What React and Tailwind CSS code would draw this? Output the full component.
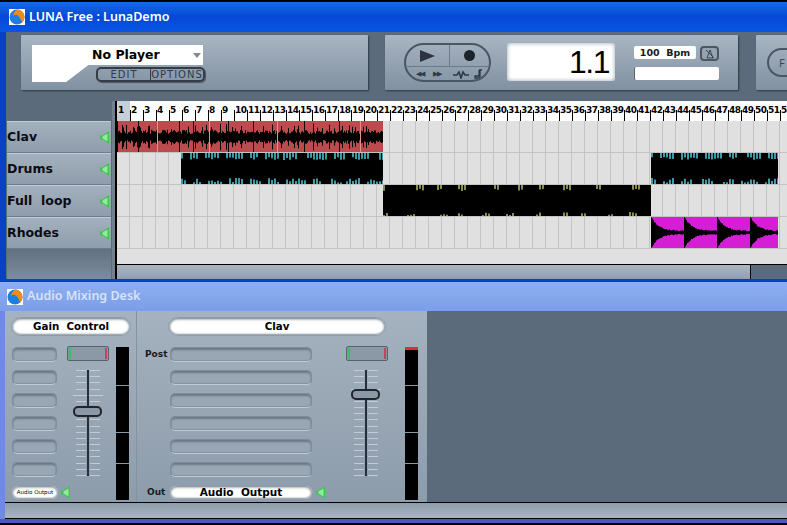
import React from 'react';

const dejavu = "font-['DejaVu_Sans',sans-serif]";

// small seeded random so the waves stay the same between runs
const makeRand = (seed) => {
  let s = seed;
  return () => {
    s = (s * 16807) % 2147483647;
    return s / 2147483647;
  };
};

const LunaIcon = () => (
  <svg width="16" height="16" viewBox="0 0 16 16" className="shrink-0">
    <rect width="16" height="16" fill="#fff" />
    <circle cx="8" cy="8" r="7.5" fill="#1c7fe0" />
    <path d="M8 .5C12 .5 15.5 4 15.5 8c0 2-1 4-2.5 5.5C12 10 10 7 8 6 6.5 5.5 5 6 4 7 4.500 4 6 2 8 .5z" fill="#f08a1d" />
  </svg>
);

const Speaker = () => (
  <svg width="9" height="13" viewBox="0 0 9 13" className="shrink-0">
    <path d="M0 4.500h2.500L9 0v13L2.500 8.500H0z" fill="#3fc458" />
    <path d="M2.500 5.500L7.500 2.500v8L2.500 7.500z" fill="#8fec9a" />
  </svg>
);

const ClavWave = () => {
  const r = makeRand(71);
  const hits = [0, 21, 40, 62, 76, 92, 111, 136, 160, 187, 222, 243];
  let d = '';
  for (let x = 0; x < 266; x++) {
    const a = 3 + r() * 4 + (r() > 0.75 ? r() * 8 : 0);
    d += `M${x + 0.5} ${16 - a}V${16 + a}`;
  }
  return (
    <svg width="266" height="31" className="block">
      <path d={d} stroke="#000" strokeWidth="1" />
      {hits.map((x, i) => (
        <path key={x} d={`M${x + 0.5} 0V31`} stroke={i % 3 === 2 ? '#e98c8c' : '#1a0505'} strokeWidth="1" />
      ))}
    </svg>
  );
};

// black clip with bright ticks on its top and bottom edge, in clusters
const TickWave = ({ width, seed, color, on, off, top, bottom, stroke }) => {
  const r = makeRand(seed);
  let d = '';
  [0, 1].forEach((side) => {
    let run = on * r();
    let active = true;
    for (let x = 0; x < width; x += 3) {
      if (run <= 0) {
        active = !active;
        run = (active ? on : off) * (0.4 + r());
      }
      run -= 3;
      if (!active) continue;
      if (side === 0) d += `M${x + 1} 0V${top * (0.6 + r() * 0.4)}`;
      else d += `M${x + 1} ${32 - bottom * (0.35 + r() * 0.65)}V32`;
    }
  });
  return (
    <svg width={width} height="32" className="block">
      <path d={d} stroke={color} strokeWidth={stroke} />
    </svg>
  );
};

const RhodesWave = () => {
  const r = makeRand(5);
  const hits = [0, 33, 66, 99];
  const amp = (x) => {
    const h = hits.filter((v) => v <= x).pop();
    const t = x - h;
    return 1 + 14 * Math.exp(-t / 7) + r() * 1.2;
  };
  let d = '';
  for (let x = 0; x < 127; x++) {
    const a = amp(x);
    d += `M${x + 0.5} ${15.5 - a}V${15.5 + a}`;
  }
  return (
    <svg width="127" height="31" className="block">
      <path d={d} stroke="#000" strokeWidth="1" />
    </svg>
  );
};

const tracks = [
  {
    name: 'Clav',
    clips: [{ start: 0, width: 266, bg: 'bg-[#bb4b4d]', wave: <ClavWave /> }],
  },
  {
    name: 'Drums',
    clips: [
      { start: 64, width: 202, bg: 'bg-black', wave: <TickWave width={202} seed={11} color="#45b8c4" on={14} off={6} top={7} bottom={7} stroke={1.7} /> },
      { start: 534, width: 127, bg: 'bg-black', wave: <TickWave width={127} seed={23} color="#45b8c4" on={14} off={6} top={7} bottom={7} stroke={1.7} /> },
    ],
  },
  {
    name: 'Full  loop',
    clips: [{ start: 266, width: 268, bg: 'bg-black', wave: <TickWave width={268} seed={37} color="#c8c870" on={6} off={20} top={6} bottom={5} stroke={1.4} /> }],
  },
  {
    name: 'Rhodes',
    clips: [{ start: 534, width: 127, bg: 'bg-[#d41fd4]', wave: <RhodesWave /> }],
  },
];

const TrackHeader = ({ name }) => (
  <div className="h-8 w-[104px] shrink-0 flex items-center justify-between pr-[2px] bg-gradient-to-b from-[#a3b0bd] to-[#8f9dac] border-t border-[#c3ccd5] border-b border-b-[#6e7c8b]">
    <span className={`${dejavu} font-bold text-[12.5px] text-[#0c0c14] whitespace-pre`}>{name}</span>
    <Speaker />
  </div>
);

const TrackRow = ({ clips }) => (
  <div className="h-8 flex bg-[#e0e0e0] bg-[repeating-linear-gradient(90deg,#e0e0e0_0,#e0e0e0_12px,#c4c4c4_12px,#c4c4c4_13px)] border-b border-[#c4c4c4]">
    {clips.map((c, i) => {
      const prevEnd = i ? clips[i - 1].start + clips[i - 1].width : 0;
      return (
        <div key={c.start} className={`${c.bg} h-[31px] overflow-hidden shrink-0`} style={{ marginLeft: c.start - prevEnd, width: c.width }}>
          {c.wave}
        </div>
      );
    })}
  </div>
);

const Ruler = () => (
  <div className="h-[20px] flex bg-white overflow-hidden w-[671px]">
    {Array.from({ length: 52 }, (_, i) => (
      <div key={i} className={`w-[13px] shrink-0 relative h-full ${i === 0 ? 'bg-[#c6cfd9]' : ''}`}>
        {i > 0 && <div className="absolute left-0 bottom-0 h-[11px] w-px bg-black" />}
        <span className={`absolute left-[1px] top-[4px] ${dejavu} font-bold text-[9px] leading-[10px] tracking-[-0.4px] text-black`}>{i + 1}</span>
      </div>
    ))}
  </div>
);

const Slot = ({ className }) => (
  <div className={`h-[15px] rounded-[5px] bg-[#99a7b5] border border-[#7f8d9b] border-b-[#c1cad3] shadow-[inset_0_2px_2px_#6b7885,inset_0_-1px_1px_#84929f] ${className}`} />
);

const WhitePill = ({ children, className }) => (
  <div className={`flex items-center justify-center bg-white rounded-full border border-[#8d9ba9] shadow-[inset_0_1px_3px_#5f6c79,inset_0_-1px_2px_#93a0ad] ${dejavu} font-bold text-black ${className}`}>
    {children}
  </div>
);

const GainBox = () => (
  <div className="w-[42px] h-[15px] rounded-[2px] flex justify-between px-[1px] py-[1px] bg-[#8b99a7] border border-[#55626f]">
    <div className="w-[2px] bg-[#35c05a]" />
    <div className="w-[2px] bg-[#c8405a]" />
  </div>
);

const Fader = ({ knobTop, wideMark }) => {
  const marks = [0, 9, 18, 27, 33, 45, 52, 60, 67, 74, 80, 84, 88, 91, 94, 97, 100, 103];
  return (
    <div className="relative w-[30px] h-[106px] flex justify-center">
      <div className="flex flex-col justify-between w-[30px] h-full">
        {marks.map((m, i) => (
          <div key={m} className={`flex justify-between h-px ${i === wideMark ? 'h-[2px] px-0' : 'px-[3px]'}`}>
            <div className={`${i === wideMark ? 'w-[14px]' : 'w-[10px]'} bg-[#c3ccd5]`} />
            <div className={`${i === wideMark ? 'w-[14px]' : 'w-[10px]'} bg-[#c3ccd5]`} />
          </div>
        ))}
      </div>
      <div className="absolute top-0 bottom-0 left-[14px] w-[2px] bg-[#26303c]" />
      <div className="absolute left-0 w-[29px] h-[11px] rounded-[5px] border-2 border-[#20242c] bg-[#8b98a6]" style={{ top: knobTop }} />
    </div>
  );
};

const Meter = ({ peak }) => (
  <div className="w-[13px] h-[153px] mt-px bg-black flex flex-col">
    <div className={`h-[3px] shrink-0 ${peak ? 'bg-[#d83030]' : 'bg-black'}`} />
    <div className="h-[36px] shrink-0 border-b border-[#8b98a6]" />
    <div className="h-[47px] shrink-0 border-b border-[#8b98a6]" />
    <div className="h-[31px] shrink-0 border-b border-[#8b98a6]" />
  </div>
);

const panel = 'bg-gradient-to-b from-[#a9b6c3] to-[#8191a1] rounded-[1px] shadow-[1px_1px_2px_#2d3743]';

export default function App() {
  return (
    <div className="w-[787px] h-[525px] overflow-hidden bg-black flex flex-col pt-[2px] font-['Noto_Sans',sans-serif]">
      {/* main window */}
      <div className="h-[280px] shrink-0 flex flex-col bg-[#0a3fc8] pl-[6px] pb-[3px]">
        <div className="-ml-[6px] h-[30px] shrink-0 flex items-center gap-[4px] pl-[9px] bg-gradient-to-b from-[#1a68e6] via-[#0548d6] to-[#0a56e6]">
          <LunaIcon />
          <span className="text-[12.5px] font-semibold text-white">LUNA Free : LunaDemo</span>
        </div>
        <div className="flex-1 bg-[#5c6b7c] flex flex-col overflow-hidden min-h-0">
          {/* toolbar */}
          <div className="h-[69px] shrink-0 flex pt-[3px] pl-[15px]">
            <div className={`${panel} w-[347px] h-[55px] shrink-0 pt-[10px] pl-[11px]`}>
              <div className="relative w-[173px] h-[37px]">
                <div className="absolute inset-0 w-[171px] bg-white blur-[0.6px] [clip-path:polygon(0_0,100%_0,100%_54%,33%_54%,20%_100%,0_100%)]" />
                <span className={`absolute left-[60px] top-[1px] ${dejavu} font-bold text-[12.5px] whitespace-pre text-black`}>No Player</span>
                <span className="absolute left-[161px] top-[8px] w-0 h-0 border-x-[4px] border-x-transparent border-t-[5px] border-t-[#7d8a97]" />
                <div className="absolute left-[64px] top-[22px] w-[109px] h-[15px] flex rounded-[5px] border-2 border-[#333c47] shadow-[1px_1px_1px_#4a5663] text-[10px] text-[#2f3944] tracking-[1px]">
                  <span className={`${dejavu} w-[53px] text-center leading-[11px] border-r border-[#333c47]`}>EDIT</span>
                  <span className={`${dejavu} flex-1 text-center leading-[11px] whitespace-nowrap overflow-hidden`}>OPTIONS</span>
                </div>
              </div>
            </div>
            <div className={`${panel} w-[353px] h-[55px] shrink-0 ml-[17px] pt-[8px] pl-[19px] flex`}>
              <div className="w-[87px] h-[39px] rounded-[20px] border-2 border-[#4a5662] flex flex-col overflow-hidden shrink-0">
                <div className="flex h-[22px] border-b border-[#6d7b89]">
                  <div className="w-[44px] flex items-center justify-center border-r border-[#6d7b89]">
                    <span className="w-0 h-0 border-y-[6px] border-y-transparent border-l-[15px] border-l-[#2b3440]" />
                  </div>
                  <div className="flex-1 flex items-center justify-center">
                    <span className="w-[11px] h-[11px] rounded-full bg-[#1c232c]" />
                  </div>
                </div>
                <div className="flex-1 flex items-center text-[#2f3944]">
                  <span className="w-[24px] pl-[10px] text-[7px] leading-none tracking-[-1px]">◀◀</span>
                  <span className="w-[20px] pl-[3px] text-[7px] leading-none tracking-[-1px]">▶▶</span>
                  <svg width="22" height="10" viewBox="0 0 22 10" className="shrink-0">
                    <path d="M3 6h4l2-3 2 6 2-6 2 3h4" fill="none" stroke="#2f3944" strokeWidth="1.6" />
                  </svg>
                  <svg width="10" height="10" viewBox="0 0 10 10" className="ml-[1px] shrink-0">
                    <path d="M6 1h3M6 1v6H2v2h5V1" fill="none" stroke="#2f3944" strokeWidth="1.3" />
                  </svg>
                </div>
              </div>
              <div className="ml-[16px] w-[108px] h-[38px] bg-white rounded-[3px] shadow-[inset_0_0_4px_#93a0ad] flex items-center justify-end pr-[6px] shrink-0">
                <span className="font-['Liberation_Sans',sans-serif] text-[32px] leading-none tracking-[-1.5px] text-black">1.1</span>
              </div>
              <div className="ml-[19px] w-[85px] shrink-0 flex flex-col gap-[6px] pt-[3px]">
                <div className="flex justify-between">
                  <div className={`w-[62px] h-[13px] bg-white rounded-[2px] text-center ${dejavu} font-bold text-[9.500px] leading-[13px] whitespace-pre text-[#1a1a1a]`}>100  Bpm</div>
                  <div className="w-[19px] h-[15px] rounded-[4px] border-2 border-[#4a5662] bg-[#95a3b1] flex items-center justify-center">
                    <svg width="12" height="10" viewBox="0 0 12 10">
                      <path d="M3 9l3-8 3 8zM2 1l8 8" fill="none" stroke="#333c47" strokeWidth=".9" />
                    </svg>
                  </div>
                </div>
                <div className="w-[85px] h-[13px] bg-white rounded-[2px] border-l border-[#55626f]" />
              </div>
            </div>
            <div className={`${panel} w-[60px] h-[55px] shrink-0 ml-[18px] pt-[13px] pl-[11px]`}>
              <div className="w-[40px] h-[29px] rounded-full border-2 border-[#4a5662] text-[#3c4854] text-[11px] pl-[10px] leading-[25px]">F</div>
            </div>
          </div>
          {/* arrangement */}
          <div className="flex-1 flex min-h-0">
            <div className="w-[104px] ml-[1px] pt-[20px] shrink-0 flex flex-col bg-gradient-to-b from-[#5c6b7c] from-[80%] to-[#7e8d9c]">
              {tracks.map((t) => (
                <TrackHeader key={t.name} name={t.name} />
              ))}
            </div>
            <div className="w-[4px] shrink-0 pl-[1px]">
              <div className="h-full w-[3px] bg-[#73818f]" />
            </div>
            <div className="flex-1 min-w-0 flex flex-col border-l-2 border-black overflow-hidden">
              <Ruler />
              <div className="flex-1 bg-[#e0e0e0] min-h-0">
                <div className="w-[671px]">
                  {tracks.map((t) => (
                    <TrackRow key={t.name} clips={t.clips} />
                  ))}
                </div>
              </div>
              <div className="h-[15px] shrink-0 border-t border-black bg-[#5c6b7c] flex">
                <div className="w-[634px] h-full bg-gradient-to-b from-[#aab6c2] to-[#92a0ae] border-r border-black" />
              </div>
            </div>
          </div>
        </div>
      </div>

      {/* mixer window */}
      <div className="flex-1 flex flex-col bg-[#6f8be0] min-h-0">
        <div className="h-[29px] shrink-0 flex items-center gap-[4px] pl-[7px] bg-gradient-to-b from-[#8eb0f0] to-[#7c9de8]">
          <LunaIcon />
          <span className="text-[12.5px] font-semibold text-[#d6e2fa]">Audio Mixing Desk</span>
        </div>
        <div className="flex-1 ml-[5px] flex flex-col min-h-0 bg-[#5c6b7c]">
          <div className="h-[191px] shrink-0 flex">
            <div className="w-[422px] h-full shrink-0 flex bg-gradient-to-b from-[#a5b2bf] to-[#8d9cab]">
              {/* gain column */}
              <div className="w-[132px] shrink-0 border-r border-[#8593a1] pl-[6px] pt-[6px]">
                <WhitePill className="w-[120px] h-[19px] text-[10.300px] whitespace-pre">Gain  Control</WhitePill>
                <div className="flex mt-[10px]">
                  <div className="w-[49px] pl-[1px] flex flex-col gap-[8px] shrink-0 pt-[1px]">
                    {[0, 1, 2, 3, 4, 5].map((i) => (
                      <Slot key={i} className="w-[45px]" />
                    ))}
                  </div>
                  <div className="ml-[7px] w-[42px] shrink-0 flex flex-col items-center">
                    <GainBox />
                    <div className="mt-[9px]"><Fader knobTop={36} wideMark={4} /></div>
                  </div>
                  <div className="ml-[7px] shrink-0"><Meter /></div>
                </div>
                <div className="flex items-center gap-[2px] -mt-[15px]">
                  <WhitePill className="w-[48px] h-[15px] text-[5.500px] !font-normal">Audio Output</WhitePill>
                  <Speaker />
                </div>
              </div>
              {/* channel column */}
              <div className="flex-1 pl-[8px] pt-[6px]">
                <WhitePill className="ml-[23px] w-[218px] h-[19px] text-[10.300px]">Clav</WhitePill>
                <div className="flex mt-[10px]">
                  <div className="w-[167px] shrink-0 flex flex-col gap-[8px] pt-[1px]">
                    {['Post', '', '', '', '', ''].map((l, i) => (
                      <div key={i} className="flex items-center">
                        <span className={`w-[25px] shrink-0 ${dejavu} font-bold text-[9px] text-[#1a1a1a]`}>{l}</span>
                        <Slot className="w-[142px]" />
                      </div>
                    ))}
                  </div>
                  <div className="ml-[34px] w-[42px] shrink-0 flex flex-col items-center">
                    <GainBox />
                    <div className="mt-[9px] mr-[3px]"><Fader knobTop={19} wideMark={3} /></div>
                  </div>
                  <div className="ml-[17px] shrink-0"><Meter peak /></div>
                </div>
                <div className="flex items-center -mt-[15px]">
                  <span className={`w-[24px] pl-[2px] shrink-0 ${dejavu} font-bold text-[9px] text-[#1a1a1a]`}>Out</span>
                  <WhitePill className="w-[144px] h-[15px] text-[10.500px] whitespace-pre">Audio  Output</WhitePill>
                  <span className="ml-[3px]"><Speaker /></span>
                </div>
              </div>
            </div>
          </div>
          <div className="h-[17px] shrink-0 border-y border-black bg-gradient-to-b from-[#8e9cab] to-[#a9b5c1]" />
          <div className="h-[4px] shrink-0 -ml-[5px] bg-[#4f5ab8]" />
        </div>
        <div className="h-[2px] shrink-0 bg-black" />
      </div>
    </div>
  );
}
